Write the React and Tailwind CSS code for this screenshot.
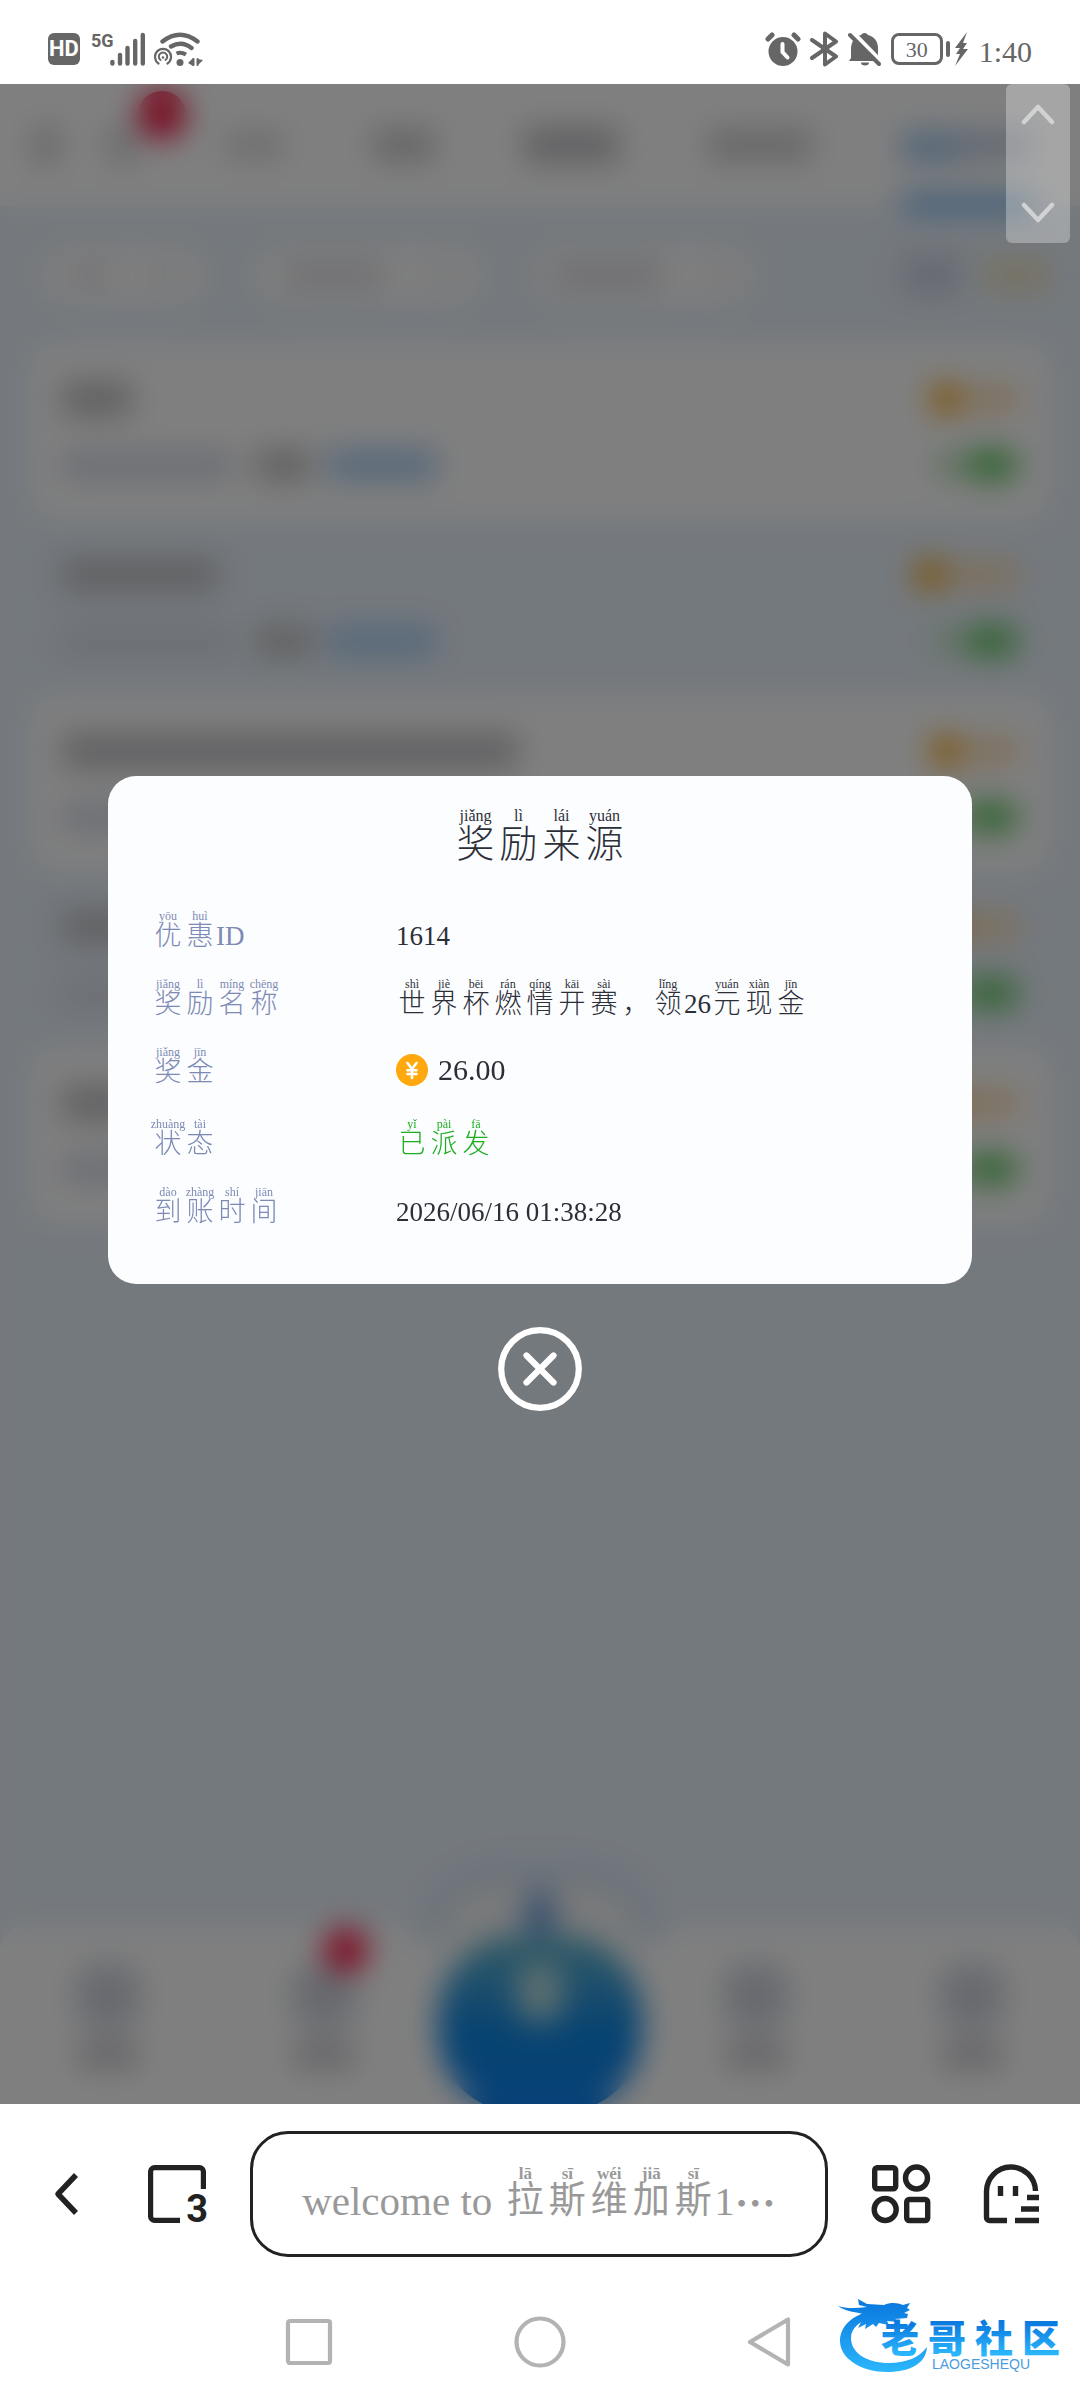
import React from 'react';

const SERIF = "font-['Liberation_Serif','Noto_Sans_CJK_SC',serif]";

const title = [['奖', 'jiǎng'], ['励', 'lì'], ['来', 'lái'], ['源', 'yuán']];

const details = [
  { label: [['优', 'yōu'], ['惠', 'huì'], 'ID'], value: ['1614'] },
  {
    label: [['奖', 'jiǎng'], ['励', 'lì'], ['名', 'míng'], ['称', 'chēng']],
    value: [
      ['世', 'shì'], ['界', 'jiè'], ['杯', 'bēi'], ['燃', 'rán'], ['情', 'qíng'], ['开', 'kāi'], ['赛', 'sài'], ['，', ''],
      ['领', 'lǐng'], '26', ['元', 'yuán'], ['现', 'xiàn'], ['金', 'jīn'],
    ],
  },
  { label: [['奖', 'jiǎng'], ['金', 'jīn']], amount: '26.00' },
  { label: [['状', 'zhuàng'], ['态', 'tài']], value: [['已', 'yǐ'], ['派', 'pài'], ['发', 'fā']], color: 'text-[#1fae1f]' },
  { label: [['到', 'dào'], ['账', 'zhàng'], ['时', 'shí'], ['间', 'jiān']], value: ['2026/06/16 01:38:28'] },
];

const address = [['拉', 'lā'], ['斯', 'sī'], ['维', 'wéi'], ['加', 'jiā'], ['斯', 'sī']];

const records = [
  { title: 'w-[70px]', amount: 'w-13', white: true },
  { title: 'w-[156px]', amount: 'w-[68px]', white: false },
  { title: 'w-[456px]', amount: 'w-13', white: true },
  { title: 'w-[156px]', amount: 'w-13', white: false },
  { title: 'w-[70px]', amount: 'w-13', white: true },
];

const rubySizes = {
  sm: { cell: 'w-8', base: 'text-[27px] leading-7 font-light', rt: 'text-[12px] leading-3' },
  md: { cell: 'w-[42px]', base: 'text-[37px] leading-10 font-normal', rt: 'text-[17px] leading-[14px] font-bold' },
  lg: { cell: 'w-[43px]', base: 'text-[38px] leading-10 font-light', rt: 'text-[16px] leading-4' },
};

// Characters with the reading above; plain strings are set as they are
function Pinyin({ parts, size = 'sm' }) {
  const s = rubySizes[size];
  return (
    <span className="flex items-end whitespace-nowrap">
      {parts.map((part, i) =>
        typeof part === 'string' ? (
          <span key={i} className={s.base}>{part}</span>
        ) : (
          <ruby key={i} className={`flex flex-col-reverse items-center ${s.cell}`}>
            <span className={s.base}>{part[0]}</span>
            <rt className={`block ${s.rt}`}>{part[1]}</rt>
          </ruby>
        )
      )}
    </span>
  );
}

function StatusBar() {
  return (
    <header className="h-21 shrink-0 bg-white flex items-center justify-between pt-[14px] px-12 text-[#666]">
      <div className="flex items-center">
        <span className="w-8 h-8 rounded-md bg-[#666] text-white text-[22px] leading-8 text-center font-bold font-['Roboto',sans-serif]">HD</span>
        <span className="ml-[11px] mb-4 text-[18px] leading-4 font-bold font-['Roboto',sans-serif]">5G</span>
        <svg className="-ml-1" width="36" height="34" viewBox="0 0 36 34" fill="none" stroke="currentColor" strokeWidth="4.4" strokeLinecap="round">
          <path d="M2.4 30v1.500M10 23v8.500M17.500 16v15.500M25.200 9v22.500M32.800 3v28.500" />
        </svg>
        <svg className="ml-2" width="49" height="34" viewBox="0 0 49 34" fill="none" stroke="currentColor" strokeLinecap="round">
          <path d="M8.500 9.500Q26-4 43.500 9.500M17 14.500Q28 8.500 37.500 16" strokeWidth="4.4" />
          <path d="M22.500 21.500Q27 19.500 32 22.500" strokeWidth="4" strokeLinecap="butt" />
          <circle cx="26" cy="30.500" r="3.500" fill="currentColor" stroke="none" />
          <path d="M4.500 31.500A8 8 0 1 1 13.500 31.500" strokeWidth="2.200" />
          <path d="M6.500 28A4.200 4.200 0 1 1 11.500 28" strokeWidth="2" />
          <circle cx="9" cy="25.500" r="1.300" fill="currentColor" stroke="none" />
          <path d="M34 31l5-5v8zM43.500 27l5.500 1-5 5z" fill="currentColor" stroke="none" />
          <path d="M39.500 27v6M43.500 27v6" strokeWidth="2" />
        </svg>
      </div>
      <div className="flex items-center">
        <svg width="36" height="36" viewBox="0 0 36 36">
          <circle cx="18" cy="20.500" r="14.500" fill="currentColor" />
          <path d="M3 8l4-4M33 8l-4-4" stroke="currentColor" strokeWidth="5" strokeLinecap="round" />
          <path d="M17.500 13v8l5 5.500" stroke="#fff" strokeWidth="4" fill="none" strokeLinecap="round" />
        </svg>
        <svg className="ml-2" width="30" height="36" viewBox="0 0 30 36" fill="none" stroke="currentColor" strokeWidth="4" strokeLinecap="round" strokeLinejoin="round">
          <path d="M3 9l24 16.500-11 8V2.500l11 8L3 27" />
        </svg>
        <svg className="ml-2" width="34" height="36" viewBox="0 0 34 36">
          <path d="M4 27V18C4 10 9 5 14 4a4 4 0 0 1 7 0c6 1.500 10 6 10 13v8l2 5H2zM14 31.500h8a4 3 0 0 1-8 0z" fill="currentColor" />
          <path d="M5 1l32 33" stroke="#fff" strokeWidth="5" />
          <path d="M3 4l29 29" stroke="currentColor" strokeWidth="4" strokeLinecap="round" />
        </svg>
        <span className={`ml-2.5 w-[52px] h-8 border-3 border-[#666] rounded-lg text-center text-[22px] leading-7 ${SERIF}`}>30</span>
        <span className="ml-[3px] w-1 h-4 rounded-full bg-[#666]" />
        <svg className="ml-1" width="15" height="36" viewBox="0 0 15 36" fill="currentColor">
          <path d="M13 1L1 17h5L2 23h4L1 35 14 18H9l4-6H9z" />
        </svg>
        <span className={`ml-2.5 mt-1.5 text-[30px] leading-8 ${SERIF}`}>1:40</span>
      </div>
    </header>
  );
}

function RecordList() {
  return (
    <div className="mx-[30px] mt-[3px]">
      {records.map((r, i) => (
        <div key={i} className={`h-44 rounded-3xl px-8 flex flex-col justify-center gap-8 ${r.white ? 'bg-white' : ''}`}>
          <div className="flex items-center justify-between">
            <div className={`h-9 rounded-md bg-[#c4c4c8] ${r.title}`} />
            <div className="flex items-center">
              <div className="size-8 rounded-full bg-[#fca816] mr-1" />
              <div className={`h-6 bg-[#ffdcae] ${r.amount}`} />
            </div>
          </div>
          <div className="flex items-center h-8">
            <div className="w-[170px] h-7 bg-[#d8dce8]" />
            <div className="ml-6 w-[56px] h-8 bg-[#c4c4c4]" />
            <div className="ml-4 w-[108px] h-8 bg-[#b0d2f4]" />
            <div className="ml-auto w-8 h-6 bg-[#c0e4c0]" />
            <div className="w-13 h-8 rounded-full bg-[#66c866]" />
          </div>
        </div>
      ))}
    </div>
  );
}

function TabBarItem({ badge }) {
  return (
    <div className="relative flex-1 flex flex-col items-center gap-3">
      <div className="size-16 rounded-3xl bg-[#cfd4de]" />
      <div className="w-15 h-7 bg-[#ccccd2]" />
      {badge && <div className="absolute -top-9 left-[50%] size-11 rounded-full bg-[#ff1744]" />}
    </div>
  );
}

// The page under the dialog, seen only through the blur
function Backdrop() {
  return (
    <div aria-hidden="true" className="absolute inset-0 flex flex-col bg-[#e9f2fb] overflow-hidden">
      <div className="h-[122px] shrink-0 bg-white flex items-center pl-[34px]">
        <div className="w-6 h-9 bg-[#ccccd0]" />
        <div className="relative ml-13 w-6 h-9 bg-[#d0d0d4]">
          <div className="absolute left-7 -top-9 size-12 rounded-full bg-[#f0103c]" />
        </div>
        <div className="ml-[92px] flex items-center gap-[90px]">
          <div className="w-[57px] h-6 bg-[#d8d8dc]" />
          <div className="w-[61px] h-8 bg-[#ccccd0]" />
          <div className="w-[95px] h-9 bg-[#c4c4c8]" />
          <div className="w-[103px] h-8 bg-[#d0d0d2]" />
          <div className="relative w-[130px] h-7 bg-[#c4d2e6]">
            <div className="w-14 h-8 bg-[#a8cdf0]" />
            <div className="absolute inset-x-0 -bottom-13 h-4 bg-[#66acf0]" />
          </div>
        </div>
      </div>
      <div className="h-[134px] shrink-0 flex items-center gap-12 pl-10 pr-8 pt-1">
        <div className="w-[166px] h-15 rounded-full bg-[#fdfdfd] flex items-center justify-between px-8">
          <div className="w-9 h-5 bg-[#e4e4ea]" />
          <div className="w-5 h-5 bg-[#e8e8ee]" />
        </div>
        <div className="w-[230px] h-15 rounded-full bg-[#fdfdfd] flex items-center justify-between px-8">
          <div className="w-24 h-6 bg-[#dedee4]" />
          <div className="w-5 h-5 bg-[#e8e8ee]" />
        </div>
        <div className="w-[224px] h-15 rounded-full bg-[#fdfdfd] flex items-center justify-between px-6">
          <div className="w-26 h-6 bg-[#dadae0]" />
          <div className="w-5 h-5 bg-[#e8e8ee]" />
        </div>
        <div className="ml-auto flex items-center gap-6">
          <div className="w-14 h-9 bg-[#ccd0e2]" />
          <div className="w-16 h-6 bg-[#efe0b4]" />
        </div>
      </div>
      <RecordList />
      <div className="relative mt-auto h-[177px] shrink-0 bg-white rounded-t-3xl flex items-center">
        <TabBarItem />
        <TabBarItem badge />
        <div className="relative flex-1 flex justify-center">
          <div className="absolute left-1/2 -translate-x-1/2 -top-14 w-[240px] h-20 rounded-t-full border-t-14 border-x-14 border-[#c4dcf2] bg-[#f2f4f6]" />
          <div className="absolute left-1/2 -translate-x-1/2 -top-7 w-7 h-12 bg-[#6c9cdc]" />
          <div className="relative mt-4 w-[204px] h-[176px] rounded-[80px] bg-gradient-to-b from-[#5fb4c8] via-[#0f88e0] to-[#0f80f0] flex justify-center pt-6">
            <div className="w-12 h-16 rounded-full bg-[#b4dce0]" />
          </div>
        </div>
        <TabBarItem />
        <TabBarItem />
      </div>
    </div>
  );
}

function CoinIcon() {
  return (
    <svg width="32" height="32" viewBox="0 0 32 32" fill="none">
      <circle cx="16" cy="16" r="16" fill="#ffa90f" />
      <path d="M11.500 9l4.500 6 4.500-6M16 15v9M11.500 16.200h9M11.500 20h9" stroke="#fff" strokeWidth="2.600" strokeLinecap="round" strokeLinejoin="round" />
    </svg>
  );
}

function RewardDialog() {
  return (
    <section role="dialog" aria-modal="true" aria-labelledby="reward-title"
      className={`w-4/5 rounded-[28px] bg-[#fcfdff] text-[#2d2f38] pt-8 pb-[58px] px-11 ${SERIF}`}>
      <h2 id="reward-title" className="flex justify-center">
        <Pinyin parts={title} size="lg" />
      </h2>
      <dl className="mt-[46px] flex flex-col gap-7">
        {details.map((row, i) => (
          <div key={i} className={`flex items-end ${row.amount ? 'pb-1' : ''}`}>
            <dt className="w-[244px] h-10 flex items-end text-[#7c8ab4]"><Pinyin parts={row.label} /></dt>
            <dd className={`h-10 flex items-end ${row.color || ''}`}>
              {row.amount ? (
                <span className="flex items-center gap-2.5 text-[30px] leading-7">
                  <CoinIcon />
                  {row.amount}
                </span>
              ) : (
                <Pinyin parts={row.value} />
              )}
            </dd>
          </div>
        ))}
      </dl>
    </section>
  );
}

function BrowserBar() {
  return (
    <nav className="h-45 shrink-0 bg-white flex items-center pl-3 pr-[14px] text-[#222]">
      <button aria-label="Back" className="w-[110px] flex justify-center">
        <svg width="26" height="44" viewBox="0 0 26 44" fill="none" stroke="currentColor" strokeWidth="5.500" strokeLinejoin="round">
          <path d="M22 3L4 22l18 19" />
        </svg>
      </button>
      <button aria-label="Tabs" className="relative w-[110px] flex justify-center">
        <svg width="58" height="58" viewBox="0 0 58 58" fill="none" stroke="currentColor" strokeWidth="5.200">
          <path d="M32 55.400H6.600a4 4 0 0 1-4-4V6.600a4 4 0 0 1 4-4h44.800a4 4 0 0 1 4 4V24" />
        </svg>
        <span className="absolute right-6 -bottom-1 text-[38px] leading-9 font-bold font-['Roboto',sans-serif]">3</span>
      </button>
      <button className={`flex-1 mx-[18px] h-[126px] rounded-[38px] border-3 border-[#222] flex items-center justify-center text-[#999] ${SERIF}`}>
        <span className="flex items-end whitespace-nowrap text-[41px] leading-10">
          <span className="mr-3">welcome to</span>
          <Pinyin parts={address} size="md" />
          <span>1</span>
          <span className="font-['Noto_Sans_CJK_SC',sans-serif] font-bold">⋯</span>
        </span>
      </button>
      <button aria-label="Apps" className="w-[110px] flex justify-center">
        <svg width="60" height="60" viewBox="0 0 60 60" fill="none" stroke="currentColor" strokeWidth="5.400">
          <rect x="3.700" y="3.700" width="21" height="21" rx="2.500" />
          <circle cx="45.500" cy="14" r="11" />
          <circle cx="14.200" cy="45.500" r="11" />
          <rect x="35.700" y="35.500" width="21" height="21" rx="2.500" />
        </svg>
      </button>
      <button aria-label="Profile" className="w-[110px] flex justify-center">
        <svg width="56" height="60" viewBox="0 0 56 60" fill="none" stroke="currentColor" strokeWidth="5.400">
          <path d="M24 56.500H6.500a3 3 0 0 1-3-3V28a24.500 24.500 0 0 1 49-1" />
          <path d="M17.500 22v10M32.500 22v10M44 33.500h12M38 45h18M32 56.500h24" />
        </svg>
      </button>
    </nav>
  );
}

function CommunityLogo() {
  return (
    <div className="absolute right-[18px] top-3 w-[224px] h-[78px]">
      <svg className="absolute inset-0" width="224" height="78" viewBox="0 0 224 78">
        <defs>
          <linearGradient id="dragon" gradientUnits="userSpaceOnUse" x1="0" y1="8" x2="0" y2="76">
            <stop offset="0" stopColor="#0b7be0" />
            <stop offset="1" stopColor="#2bb6fc" />
          </linearGradient>
          <linearGradient id="name" gradientUnits="userSpaceOnUse" x1="0" y1="28" x2="0" y2="58">
            <stop offset="0" stopColor="#0b7be0" />
            <stop offset="1" stopColor="#2bb6fc" />
          </linearGradient>
        </defs>
        <path d="M36 14C12 19 2 32 2 45c0 18 22 31 47 31 24 0 39-9 40-25-8 11-22 16-38 16-22 0-38-10-38-25 0-10 9-18 23-20z" fill="url(#dragon)" />
        <path d="M0 10c9 3 19 2 29 1l-8-2-1-6 9 5 17 1c7-3 14-2 19 0l7-2-3 5 3 2-6 3 4 1-1 4-12 1 4 3-12-1 2 4-10-2-3 4-3-3-8 5 1-5-8 4 3-6-4-1 6-7C17 16 6 15 0 10z" fill="url(#dragon)" />
        <g fill="url(#name)" className="text-[38px] font-black font-['Noto_Sans_CJK_SC',sans-serif]">
          <text x="43" y="56">老</text>
          <text x="90" y="56">哥</text>
          <text x="137" y="56">社</text>
          <text x="184" y="56">区</text>
        </g>
        <text x="94" y="73" fill="#4a9ce0" className="text-[14px] font-['Liberation_Sans',sans-serif]">LAOGESHEQU</text>
      </svg>
    </div>
  );
}

function SystemNav() {
  return (
    <nav className="relative h-29 shrink-0 bg-white flex items-center justify-center gap-[179px] text-[#b3b3b3]">
      <button aria-label="Recent apps">
        <svg width="52" height="52" viewBox="0 0 52 52" fill="none" stroke="currentColor" strokeWidth="4.200">
          <rect x="5" y="5" width="42" height="42" rx="2" />
        </svg>
      </button>
      <button aria-label="Home">
        <svg width="52" height="52" viewBox="0 0 52 52" fill="none" stroke="currentColor" strokeWidth="4.200">
          <circle cx="26" cy="26" r="23.500" />
        </svg>
      </button>
      <button aria-label="Go back">
        <svg width="52" height="52" viewBox="0 0 52 52" fill="none" stroke="currentColor" strokeWidth="4.200" strokeLinejoin="round">
          <path d="M43 3.500v45L5 26z" />
        </svg>
      </button>
      <CommunityLogo />
    </nav>
  );
}

export default function App() {
  return (
    <div className="min-h-screen flex flex-col bg-white">
      <StatusBar />
      <main className="relative flex-1 overflow-hidden">
        <Backdrop />
        <div className="absolute inset-0 flex flex-col items-center justify-center gap-[43px] pb-0.5 bg-black/50 backdrop-blur-[15px]">
          <RewardDialog />
          <button aria-label="Close">
            <svg width="84" height="84" viewBox="0 0 84 84" fill="none" stroke="#fff" strokeWidth="6.200" strokeLinecap="round">
              <circle cx="42" cy="42" r="38.800" />
              <path d="M28.500 28.500l27 27M55.500 28.500l-27 27" />
            </svg>
          </button>
        </div>
        <div className="absolute right-2.5 top-0 w-16 h-[159px] rounded-md bg-white/30 flex flex-col items-center justify-between py-4">
          <button aria-label="Scroll up">
            <svg width="34" height="26" viewBox="0 0 34 26" fill="none" stroke="#d0d2d4" strokeWidth="4.500" strokeLinecap="round" strokeLinejoin="round">
              <path d="M3 22L17 7l14 15" />
            </svg>
          </button>
          <button aria-label="Scroll down">
            <svg width="34" height="26" viewBox="0 0 34 26" fill="none" stroke="#d0d2d4" strokeWidth="4.500" strokeLinecap="round" strokeLinejoin="round">
              <path d="M3 4l14 15L31 4" />
            </svg>
          </button>
        </div>
      </main>
      <BrowserBar />
      <SystemNav />
    </div>
  );
}
